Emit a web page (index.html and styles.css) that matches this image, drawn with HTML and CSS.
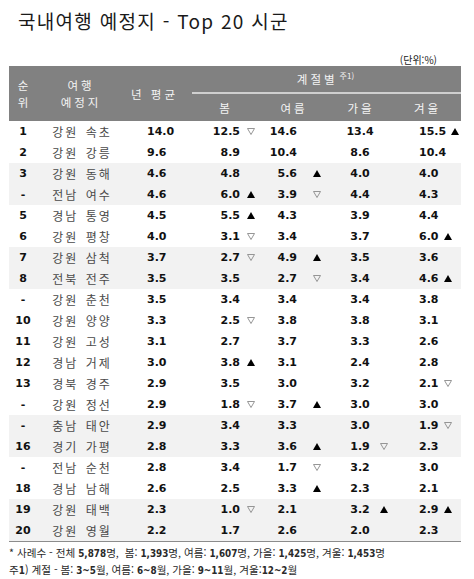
FILE: index.html
```html
<!DOCTYPE html>
<html lang="ko">
<head>
<meta charset="utf-8">
<link rel="stylesheet" href="styles.css">
</head>
<body>
<div class="page">
  <h1 class="title">국내여행 예정지 - Top 20 시군</h1>
  <div class="unit">(단위:%)</div>
  <div class="table">
    <div class="thead">
      <div class="h-rank"><span>순</span><span>위</span></div>
      <div class="h-name"><span>여행</span><span>예정지</span></div>
      <div class="h-avg">년 평균</div>
      <div class="h-season">계절별 <sup>주1)</sup></div>
      <div class="h-line"></div>
      <div class="h-sub">봄</div>
      <div class="h-sub">여름</div>
      <div class="h-sub">가을</div>
      <div class="h-sub">겨울</div>
    </div>
    <div id="rows"></div>
  </div>
  <div class="notes">
    <p>* 사례수 - 전체 <b>5,878</b>명, &nbsp;봄: <b>1,393</b>명, 여름: <b>1,607</b>명, 가을: <b>1,425</b>명, 겨울: <b>1,453</b>명</p>
    <p>주<b>1</b>) 계절 - 봄: <b>3~5</b>월, 여름: <b>6~8</b>월, 가을: <b>9~11</b>월, 겨울:<b>12~2</b>월</p>
  </div>
</div>
<script src="app.js"></script>
</body>
</html>
```
FILE: app.js
```js
const data = [
  ["1","강원 속초","14.0",["12.5","d"],["14.6",""],["13.4",""],["15.5","u"],0],
  ["2","강원 강릉","9.6",["8.9",""],["10.4",""],["8.6",""],["10.4",""],0],
  ["3","강원 동해","4.6",["4.8",""],["5.6","u"],["4.0",""],["4.0",""],1],
  ["-","전남 여수","4.6",["6.0","u"],["3.9","d"],["4.4",""],["4.3",""],1],
  ["5","경남 통영","4.5",["5.5","u"],["4.3",""],["3.9",""],["4.4",""],0],
  ["6","강원 평창","4.0",["3.1","d"],["3.4",""],["3.7",""],["6.0","u"],0],
  ["7","강원 삼척","3.7",["2.7","d"],["4.9","u"],["3.5",""],["3.6",""],1],
  ["8","전북 전주","3.5",["3.5",""],["2.7","d"],["3.4",""],["4.6","u"],1],
  ["-","강원 춘천","3.5",["3.4",""],["3.4",""],["3.4",""],["3.8",""],0],
  ["10","강원 양양","3.3",["2.5","d"],["3.8",""],["3.8",""],["3.1",""],0],
  ["11","강원 고성","3.1",["2.7",""],["3.7",""],["3.3",""],["2.6",""],0],
  ["12","경남 거제","3.0",["3.8","u"],["3.1",""],["2.4",""],["2.8",""],0],
  ["13","경북 경주","2.9",["3.5",""],["3.0",""],["3.2",""],["2.1","d"],0],
  ["-","강원 정선","2.9",["1.8","d"],["3.7","u"],["3.0",""],["3.0",""],0],
  ["-","충남 태안","2.9",["3.4",""],["3.3",""],["3.0",""],["1.9","d"],1],
  ["16","경기 가평","2.8",["3.3",""],["3.6","u"],["1.9","d"],["2.3",""],1],
  ["-","전남 순천","2.8",["3.4",""],["1.7","d"],["3.2",""],["3.0",""],0],
  ["18","경남 남해","2.6",["2.5",""],["3.3","u"],["2.3",""],["2.1",""],0],
  ["19","강원 태백","2.3",["1.0","d"],["2.1",""],["3.2","u"],["2.9","u"],1],
  ["20","강원 영월","2.2",["1.7",""],["2.6",""],["2.0",""],["2.3",""],1]
];
const UP = '<svg class="tri" viewBox="0 0 8 7"><path d="M4 0L8 7H0Z" fill="#000"/></svg>';
const DN = '<svg class="tri" viewBox="0 0 8 7"><path d="M0.5 0.5H7.5L4 6.5Z" fill="none" stroke="#8a8a8a" stroke-width="0.9"/></svg>';
const seasons = ["spring","summer","autumn","winter"];
const rows = document.getElementById("rows");
rows.innerHTML = data.map(r => {
  const cells = [3,4,5,6].map((i, k) => {
    const [v, t] = r[i];
    const tri = t === "u" ? UP : t === "d" ? DN : "";
    return `<div class="cell ${seasons[k]}"><span class="num">${v}</span><span class="mk">${tri}</span></div>`;
  }).join("");
  return `<div class="row${r[7] ? " shade" : ""}"><div class="rank">${r[0]}</div><div class="name">${r[1]}</div><div class="avg">${r[2]}</div>${cells}</div>`;
}).join("");
```
FILE: styles.css
```css
body {
  margin: 0;
  background: #fff;
  font-family: "Noto Sans CJK KR", "DejaVu Sans", sans-serif;
  color: #222;
}
.page {
  width: 474px;
  padding: 0 13px 0 9px;
  box-sizing: border-box;
}
.title {
  margin: 0;
  padding: 9px 0 0 9px;
  font-size: 19px;
  line-height: 24px;
  font-weight: 400;
  letter-spacing: 1.3px;
  color: #1a1a1a;
}
.unit {
  margin-top: 21px;
  padding-right: 24px;
  text-align: right;
  font-size: 10px;
  line-height: 12px;
  color: #222;
}
.table {
  width: 452px;
  border-bottom: 1px solid #8c8c8c;
}
.thead {
  display: grid;
  grid-template-columns: 28px 88px 67px 68px 68px 66px 67px;
  grid-template-rows: 26px 2px 27px;
  background: #818181;
  color: #f4f4f4;
  font-size: 11.5px;
  letter-spacing: 3px;
}
.h-rank, .h-name {
  grid-row: 1 / 4;
  display: flex;
  flex-direction: column;
  align-items: center;
  justify-content: center;
  line-height: 17px;
}
.h-rank { letter-spacing: 0; }
.h-avg {
  grid-row: 1 / 4;
  display: flex;
  align-items: center;
  justify-content: center;
  padding-right: 8px;
}
.h-season {
  grid-column: 4 / 8;
  display: flex;
  align-items: center;
  justify-content: center;
  padding-right: 2px;
}
.h-season sup {
  font-size: 8px;
  letter-spacing: 0;
  margin-left: 2px;
  align-self: flex-start;
  line-height: 1;
  margin-top: 6px;
}
.h-line {
  grid-column: 4 / 8;
  background: #cfcfcf;
}
.h-sub {
  display: flex;
  align-items: center;
  justify-content: center;
}
.row {
  display: grid;
  grid-template-columns: 28px 88px 67px 68px 68px 66px 67px;
  height: 21px;
  align-items: center;
  font-family: "DejaVu Sans", sans-serif;
  font-weight: 700;
  font-size: 11px;
  color: #111;
}
.row.shade { background: #f2f2f2; }
.rank { text-align: center; }
.name {
  font-family: "Noto Sans CJK KR", sans-serif;
  font-weight: 400;
  font-size: 12px;
  letter-spacing: 2px;
  word-spacing: 2px;
  color: #4a4a4a;
  text-align: center;
  padding-left: 2px;
}
.avg { padding-left: 22px; }
.cell {
  display: grid;
  align-items: center;
}
.cell .mk { display: flex; align-items: center; }
.tri { width: 8px; height: 7px; display: block; }
.spring { grid-template-columns: 48px 8px; column-gap: 7px; }
.spring .num { text-align: right; }
.summer { grid-template-columns: 37px 8px; column-gap: 16px; }
.summer .num { text-align: right; }
.autumn { grid-template-columns: 34px 8px; column-gap: 3px; padding-left: 15px; }
.autumn .num { text-align: center; }
.winter { grid-template-columns: auto 8px; justify-content: start; column-gap: 5px; padding-left: 25px; }
.winter .num { text-align: left; }
.notes {
  padding-top: 3px;
  font-size: 10.6px;
  line-height: 16px;
  color: #2a2a2a;
}
.notes p { margin: 0; }
.notes b {
  font-family: "DejaVu Sans Condensed", "DejaVu Sans", sans-serif;
  font-size: 9.8px;
  font-weight: 700;
}
```
